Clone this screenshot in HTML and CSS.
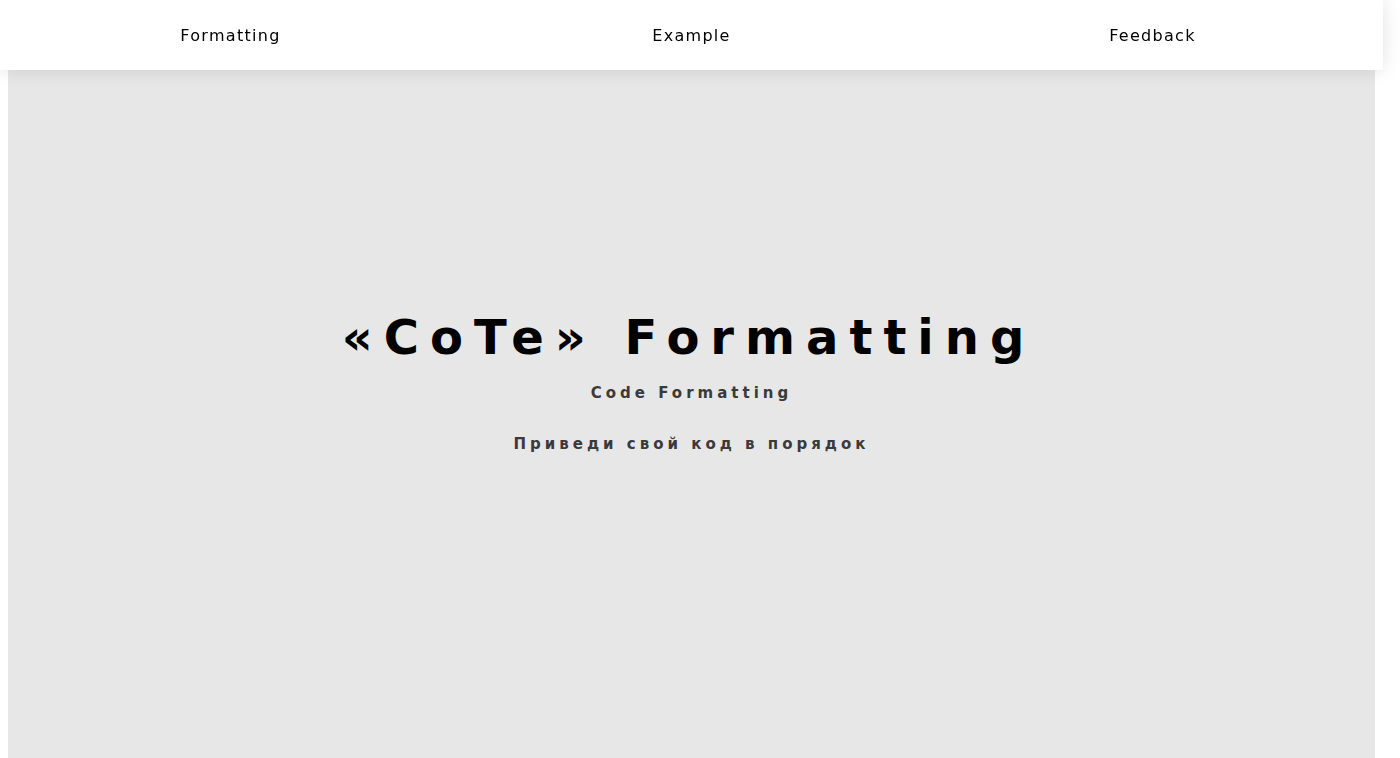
FILE: index.html
```html
<!DOCTYPE html>
<html lang="ru">
<head>
<meta charset="utf-8">
<title>CoTe Formatting</title>
<link rel="stylesheet" href="styles.css">
</head>
<body>
<header class="topbar">
  <nav class="nav">
    <a class="nav-link" href="#formatting">Formatting</a>
    <a class="nav-link" href="#example">Example</a>
    <a class="nav-link" href="#feedback">Feedback</a>
  </nav>
</header>
<main class="hero">
  <div class="hero-inner">
    <h1 class="hero-title">«CoTe» Formatting</h1>
    <p class="hero-sub">Code Formatting</p>
    <p class="hero-tag">Приведи свой код в порядок</p>
  </div>
</main>
</body>
</html>
```
FILE: styles.css
```css
html, body {
  margin: 0;
  padding: 0;
  background: #ffffff;
  overflow: hidden;
}
body {
  font-family: "DejaVu Sans", "Liberation Sans", sans-serif;
  color: #000;
}
.topbar {
  position: fixed;
  top: 0;
  left: 0;
  width: 1383px;
  height: 70px;
  background: #ffffff;
  box-shadow: 0 0 18px rgba(0, 0, 0, 0.12);
  z-index: 10;
}
.nav {
  display: grid;
  grid-template-columns: 1fr 1fr 1fr;
  height: 100%;
  align-items: center;
}
.nav-link {
  justify-self: center;
  font-size: 16px;
  letter-spacing: 1.3px;
  color: #000;
  text-decoration: none;
}
.hero {
  margin: 8px 25px 0 8px;
  height: 750px;
  background: #e7e7e7;
  display: flex;
  align-items: center;
  justify-content: center;
}
.hero-inner {
  display: flex;
  flex-direction: column;
  align-items: center;
  padding-bottom: 4px;
}
.hero-title {
  margin: 0;
  font-size: 48px;
  font-weight: bold;
  letter-spacing: 11px;
  padding-right: 6px;
  line-height: 56px;
  color: #000;
}
.hero-sub {
  margin: 19px 0 0;
  font-size: 15px;
  font-weight: bold;
  letter-spacing: 4px;
  color: #3a3a3a;
}
.hero-tag {
  margin: 33px 0 0;
  font-size: 15px;
  font-weight: bold;
  letter-spacing: 4px;
  color: #3a3a3a;
}
```
